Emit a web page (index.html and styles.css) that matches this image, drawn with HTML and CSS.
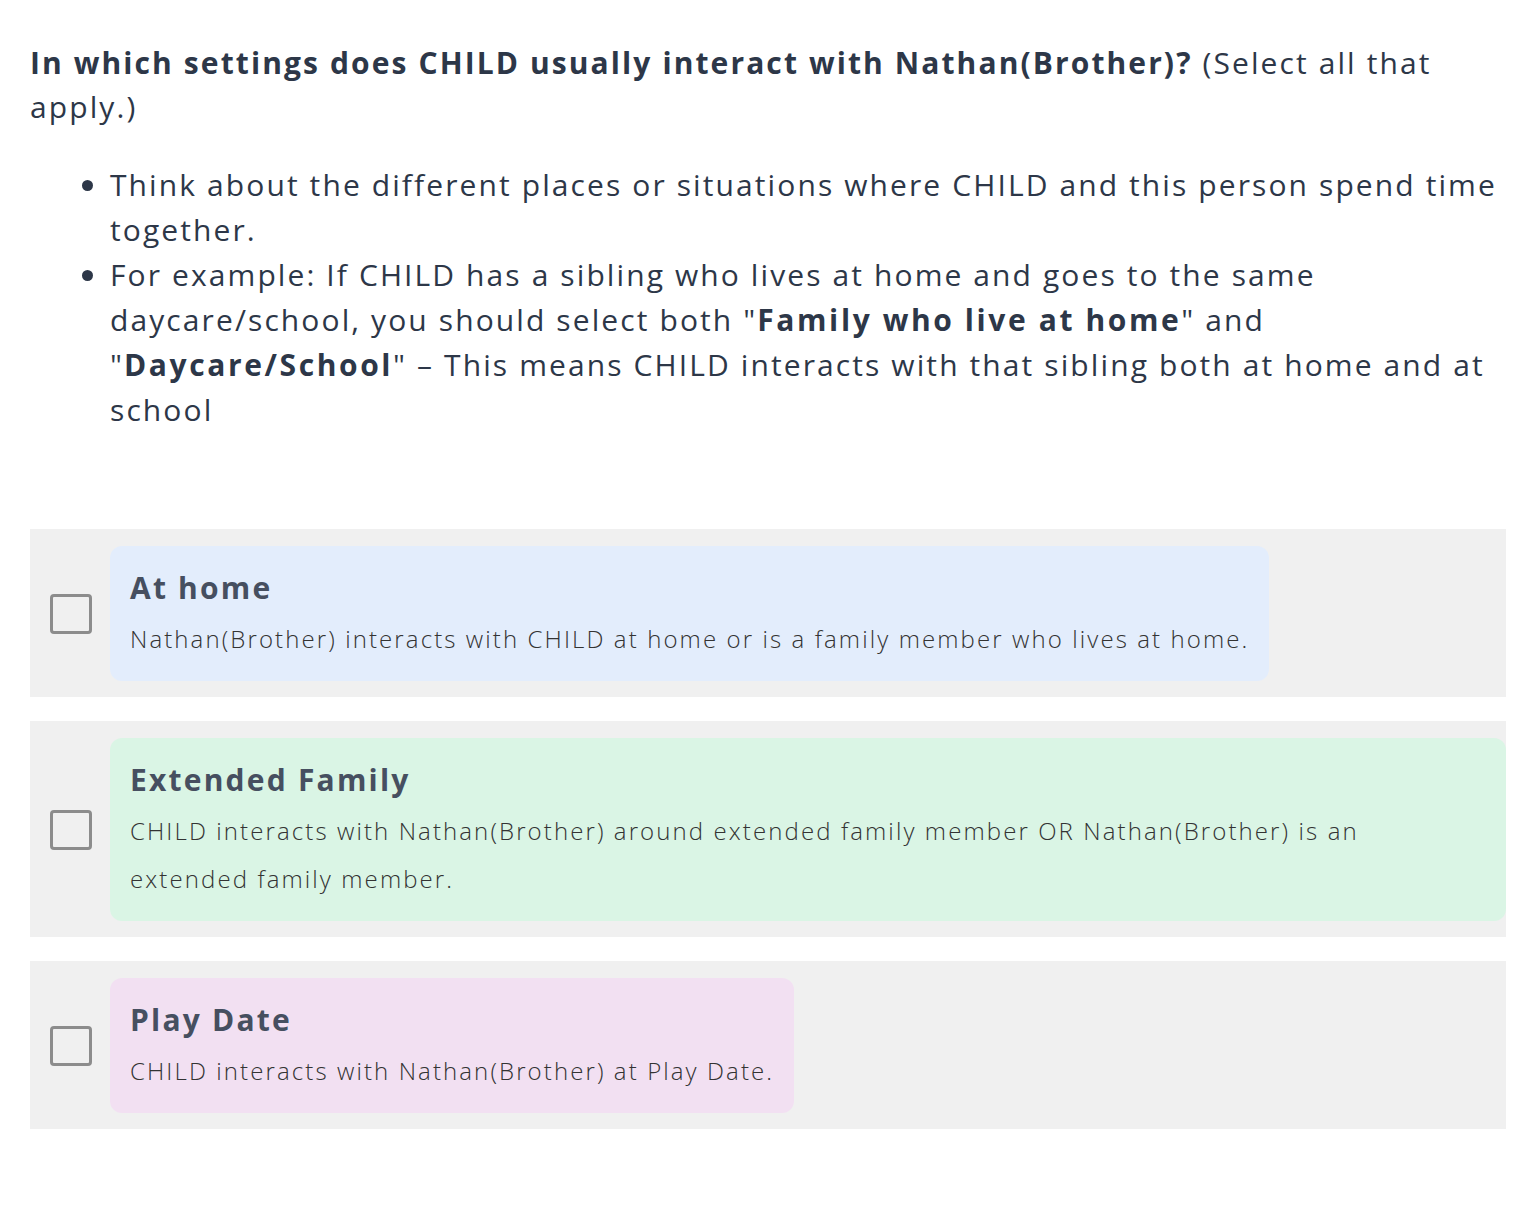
FILE: index.html
```html
<!DOCTYPE html>
<html lang="en">
<head>
<meta charset="utf-8">
<link rel="stylesheet" href="styles.css">
</head>
<body>
<main class="page">
  <h1 class="question"><strong>In which settings does CHILD usually interact with Nathan(Brother)?</strong> (Select all that apply.)</h1>
  <ul class="hints">
    <li>Think about the different places or situations where CHILD and this person spend time together.</li>
    <li>For example: If CHILD has a sibling who lives at home and goes to the same daycare/school, you should select both "<strong>Family who live at home</strong>" and "<strong>Daycare/School</strong>" – This means CHILD interacts with that sibling both at home and at school</li>
  </ul>
  <div class="options">
    <label class="option">
      <span class="box"></span>
      <span class="card card-blue">
        <span class="card-title">At home</span>
        <span class="card-desc">Nathan(Brother) interacts with CHILD at home or is a family member who lives at home.</span>
      </span>
    </label>
    <label class="option">
      <span class="box"></span>
      <span class="card card-green card-wrapped">
        <span class="card-title">Extended Family</span>
        <span class="card-desc">CHILD interacts with Nathan(Brother) around extended family member OR Nathan(Brother) is an extended family member.</span>
      </span>
    </label>
    <label class="option">
      <span class="box"></span>
      <span class="card card-pink">
        <span class="card-title">Play Date</span>
        <span class="card-desc">CHILD interacts with Nathan(Brother) at Play Date.</span>
      </span>
    </label>
  </div>
</main>
</body>
</html>
```
FILE: styles.css
```css
* { box-sizing: border-box; }
html, body { margin: 0; padding: 0; background: #ffffff; }
body {
  font-family: "Open Sans", "Noto Sans", sans-serif;
  color: #2d3748;
}
.page {
  padding: 41px 18px 80px 30px;
}
.question {
  margin: 0;
  font-size: 30px;
  line-height: 44px;
  font-weight: 400;
  letter-spacing: 2.1px;
  color: #2d3748;
}
.question strong { font-weight: 700; }
.hints {
  margin: 33px 0 0 0;
  padding-left: 80px;
  font-size: 30px;
  line-height: 45px;
  letter-spacing: 2.1px;
  color: #2d3748;
}
.hints strong { font-weight: 700; letter-spacing: 2.6px; }
.options {
  margin-top: 97px;
  display: flex;
  flex-direction: column;
  gap: 24px;
}
.option {
  display: flex;
  align-items: center;
  gap: 18px;
  background: #f0f0f0;
  padding: 17px 0 16px 20px;
}
.box {
  flex: 0 0 auto;
  width: 42px;
  height: 40px;
  border: 3px solid #8c8c8c;
  border-radius: 4px;
}
.card {
  display: flex;
  flex-direction: column;
  padding: 20px 20px 18px 20px;
  border-radius: 12px;
  min-width: 0;
}
.card-wrapped { flex: 1 1 auto; }
.card-blue { background: #e3edfc; }
.card-green { background: #daf5e5; }
.card-pink { background: #f2e0f2; }
.card-title {
  font-size: 30px;
  line-height: 44px;
  font-weight: 700;
  letter-spacing: 2.2px;
  color: #464f60;
}
.card-desc {
  margin-top: 5px;
  max-width: 1320px;
  font-size: 24px;
  line-height: 48px;
  font-weight: 300;
  letter-spacing: 2.1px;
  color: #333333;
}
```
